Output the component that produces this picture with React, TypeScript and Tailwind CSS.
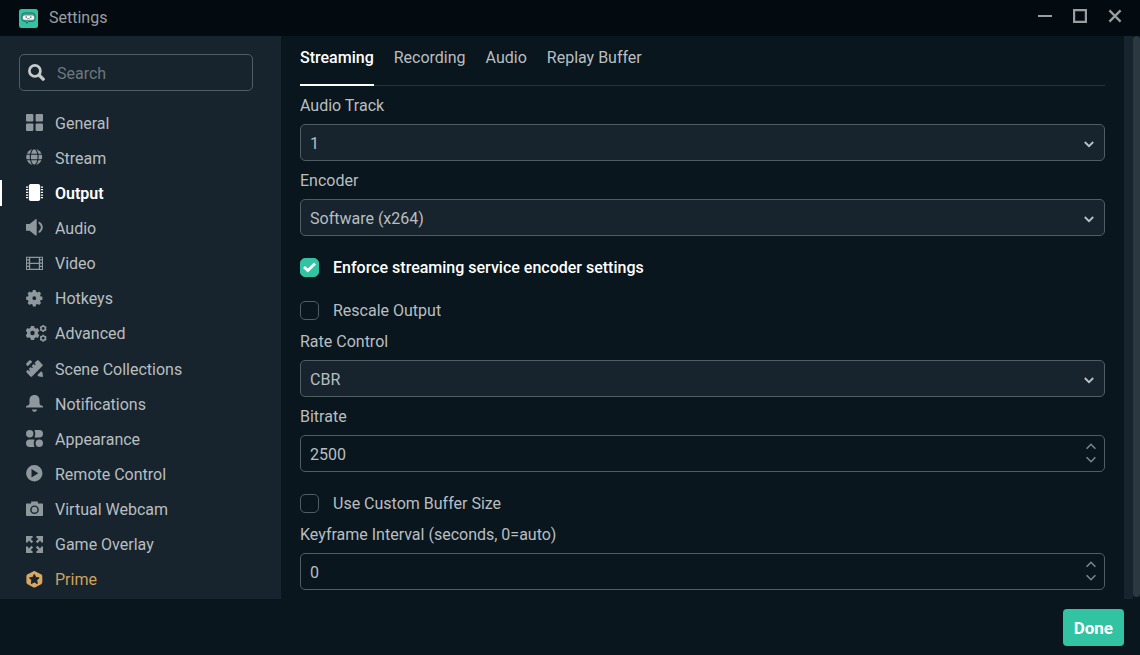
import React, { useState } from "react";

type IconProps = { children: React.ReactNode; wide?: boolean };

function Glyph({ children, wide }: IconProps) {
  return (
    <svg
      viewBox={wide ? "0 0 21 17" : "0 0 17 17"}
      className={wide ? "h-[17px] w-[21px] shrink-0" : "h-[17px] w-[17px] shrink-0"}
      fill="currentColor"
      aria-hidden="true"
    >
      {children}
    </svg>
  );
}

/** Outline of a toothed wheel with a round hole in the middle. */
function gearPath(cx: number, cy: number, outer: number, inner: number, teeth: number, hole: number) {
  const points: string[] = [];
  const step = (Math.PI * 2) / teeth;
  for (let i = 0; i < teeth; i++) {
    const mid = i * step - Math.PI / 2;
    const corners: [number, number][] = [
      [-0.34, inner],
      [-0.22, outer],
      [0.22, outer],
      [0.34, inner],
    ];
    for (const [offset, radius] of corners) {
      const angle = mid + offset * step;
      points.push(`${(cx + radius * Math.cos(angle)).toFixed(2)} ${(cy + radius * Math.sin(angle)).toFixed(2)}`);
    }
  }
  return `M${points.join("L")}zM${cx} ${cy - hole}a${hole} ${hole} 0 1 0 0 ${hole * 2}a${hole} ${hole} 0 1 0 0 ${-hole * 2}z`;
}

const GridIcon = () => (
  <Glyph>
    <rect x="0" y="0" width="7.4" height="7.4" rx="1" />
    <rect x="9.6" y="0" width="7.4" height="7.4" rx="1" />
    <rect x="0" y="9.6" width="7.4" height="7.4" rx="1" />
    <rect x="9.6" y="9.6" width="7.4" height="7.4" rx="1" />
  </Glyph>
);

const GlobeIcon = () => (
  <Glyph>
    <circle cx="8.2" cy="8" r="8" />
    <g fill="none" stroke="#17242d" strokeWidth="1.1">
      <ellipse cx="8.2" cy="8" rx="3.9" ry="8.2" />
      <path d="M0 5.3h16.4M0 10.7h16.4" />
    </g>
  </Glyph>
);

const ChipIcon = () => (
  <Glyph>
    <rect x="2.900" y="0" width="11.200" height="17" rx="1.800" />
    <path d="M0 2.4h2.2v1.3H0zM0 5h2.2v1.3H0zM0 7.7h2.2v1.3H0zM0 10.4h2.2v1.3H0zM0 13h2.2v1.3H0zM14.8 2.4H17v1.3h-2.2zM14.8 5H17v1.3h-2.2zM14.8 7.7H17v1.3h-2.2zM14.8 10.4H17v1.3h-2.2zM14.8 13H17v1.3h-2.2z" />
  </Glyph>
);

const SpeakerIcon = () => (
  <Glyph>
    <path d="M0 4.9h3.600L9.600.2c.5-.4 1.100-.1 1.100.5v15.200c0 .6-.6.9-1.100.5l-6-4.700H0z" />
    <path d="M12.600 2.500c2.600.9 4.200 3.100 4.200 5.800s-1.600 4.900-4.200 5.800v-2.200c1.400-.7 2.200-2 2.200-3.600s-.8-2.900-2.200-3.600z" />
  </Glyph>
);

const FilmIcon = () => (
  <Glyph>
    <path
      fillRule="evenodd"
      d="M0 1.700h17v13.300H0zM1 2.800v1.500h1.900V2.800zm0 2.800v1.900h1.900V5.600zm0 3.200v1.900h1.900V8.800zm0 3.200v1.900h1.900V12zM4.200 3v4.700h8.600V3zm0 5.900v4.800h8.600V8.900zM14.100 2.800v1.500H16V2.800zm0 2.800v1.900H16V5.600zm0 3.200v1.900H16V8.800zm0 3.200v1.900H16V12z"
    />
  </Glyph>
);

const GearIcon = () => (
  <Glyph>
    <path fillRule="evenodd" d={gearPath(8.3, 8.2, 8.3, 6.6, 8, 1.9)} />
  </Glyph>
);

const GearsIcon = () => (
  <Glyph wide>
    <path fillRule="evenodd" d={gearPath(6.5, 8, 7.2, 5.5, 6, 2.2)} />
    <path fillRule="evenodd" d={gearPath(17.2, 3.5, 3.6, 3, 6, 1.4)} />
    <path fillRule="evenodd" d={gearPath(17.2, 13.2, 3.6, 3, 6, 1.4)} />
  </Glyph>
);

const ToolsIcon = () => (
  <Glyph>
    <path d="M.7 2.900 2.900.7c.7-.7 1.700-.6 2.300 0l1.100 1.100-4.500 4.500L.7 5.200C.1 4.600 0 3.600.7 2.900z" />
    <path d="M11 .6c.5-.5 1.100-.5 1.600 0l3.800 3.800c.5.500.5 1.100 0 1.600L6 16.400c-.5.500-1.100.5-1.600 0L.6 12.600c-.5-.5-.5-1.100 0-1.600l1.200-1.200 1.300 1.300.9-.9-1.300-1.300 2-2 1.300 1.300.9-.9-1.300-1.300 2-2 1.300 1.300.9-.9-1.300-1.300z" />
    <path d="m15.100 11.300 1.200 1.200c.2.200.3.400.3.700l.4 3c0 .5-.3.800-.8.800l-3-.4c-.3 0-.5-.1-.7-.3l-1.200-1.200z" />
  </Glyph>
);

const BellIcon = () => (
  <Glyph>
    <path d="M8.500 0c3.200 0 5 2.200 5 5.200v3.100c0 1.200.8 1.900 2 2.200.9.200 1.500.5 1.500 1.100v.9H0v-.9c0-.6.6-.9 1.500-1.100 1.200-.3 2-1 2-2.200V5.200C3.500 2.200 5.300 0 8.500 0zM5.900 14.400h5.200c-.4 1.400-1.300 2.300-2.600 2.300s-2.200-.9-2.600-2.300z" />
  </Glyph>
);

const ShapesIcon = () => (
  <Glyph>
    <circle cx="3.700" cy="3.700" r="3.700" />
    <path d="M8.600.7c-.2-.4 0-.7.400-.7h4.300a3.700 3.700 0 0 1 0 7.400H9c-.4 0-.6-.3-.4-.7.900-1.900.9-4.100 0-6zM8.400 10.300c.2-.4 0-.7-.4-.7H3.700a3.700 3.700 0 0 0 0 7.400H8c.4 0 .6-.3.400-.7-.9-1.900-.9-4.100 0-6z" />
    <circle cx="13.300" cy="13.300" r="3.700" />
  </Glyph>
);

const PlayIcon = () => (
  <Glyph>
    <path fillRule="evenodd" d="M8.300 0a8.200 8.200 0 1 0 0 16.400A8.200 8.200 0 0 0 8.300 0zM5.500 4v8.400l6.800-4.200z" />
  </Glyph>
);

const CameraIcon = () => (
  <Glyph>
    <path
      fillRule="evenodd"
      d="M5.100.6h6.800v2H16c.6 0 1 .4 1 1v10.500c0 .6-.4 1-1 1H1c-.6 0-1-.4-1-1V3.600c0-.6.400-1 1-1h4.100zM8.500 4.400a4.300 4.300 0 1 0 0 8.600 4.300 4.300 0 0 0 0-8.600zM8.500 5.800a2.900 2.900 0 1 0 0 5.800 2.900 2.900 0 0 0 0-5.800z"
    />
  </Glyph>
);

const ExpandIcon = () => (
  <Glyph>
    <path d="M0 0h6.600v1.700L4.600 2.900l2.600 2.600-1.700 1.700-2.600-2.600-1.200 2H0zM17 0h-6.600v1.700l2 1.200-2.600 2.600 1.700 1.700 2.600-2.600 1.200 2H17zM0 17h6.600v-1.700l-2-1.200 2.600-2.600-1.700-1.700-2.600 2.600-1.200-2H0zM17 17h-6.600v-1.700l2-1.200-2.600-2.600 1.700-1.700 2.600 2.600 1.200-2H17z" />
  </Glyph>
);

const PrimeIcon = () => (
  <Glyph>
    <path d="M7.200.4c.7-.4 1.500-.4 2.200 0l5.600 2.800c.8.400 1.300 1.100 1.300 2v6.100c0 .8-.4 1.500-1.100 1.900l-5.800 3c-.7.400-1.500.4-2.200 0l-5.600-3c-.7-.4-1.200-1.100-1.200-1.900V5.200c0-.8.400-1.600 1.200-2z" />
    <path
      fill="#17242d"
      stroke="#17242d"
      strokeWidth="1"
      strokeLinejoin="round"
      d="m8.300 3.400 1.500 3 3.300.5-2.400 2.300.6 3.400-3-1.600-3 1.600.6-3.400-2.400-2.300 3.300-.5z"
    />
  </Glyph>
);

const navItems: { name: string; icon: React.ReactNode }[] = [
  { name: "General", icon: <GridIcon /> },
  { name: "Stream", icon: <GlobeIcon /> },
  { name: "Output", icon: <ChipIcon /> },
  { name: "Audio", icon: <SpeakerIcon /> },
  { name: "Video", icon: <FilmIcon /> },
  { name: "Hotkeys", icon: <GearIcon /> },
  { name: "Advanced", icon: <GearsIcon /> },
  { name: "Scene Collections", icon: <ToolsIcon /> },
  { name: "Notifications", icon: <BellIcon /> },
  { name: "Appearance", icon: <ShapesIcon /> },
  { name: "Remote Control", icon: <PlayIcon /> },
  { name: "Virtual Webcam", icon: <CameraIcon /> },
  { name: "Game Overlay", icon: <ExpandIcon /> },
  { name: "Prime", icon: <PrimeIcon /> },
];

function NavItem({ name, icon }: { name: string; icon: React.ReactNode }) {
  const active = name === "Output";
  const tone = active
    ? "font-semibold text-white"
    : name === "Prime"
      ? "text-[#d0a15c]"
      : "text-[#b9bec1]";
  const iconTone = active ? "text-white" : name === "Prime" ? "text-[#d9a75f]" : "text-[#8f989d]";
  return (
    <li className="flex min-h-[35px] flex-1 items-center">
      <a
        href={"#" + name.toLowerCase().replace(" ", "-")}
        aria-current={active ? "page" : undefined}
        className={`flex h-[26px] w-full items-center border-l-2 pl-6 ${active ? "border-white" : "border-transparent"} ${tone}`}
      >
        <span className={`flex w-[29px] ${iconTone}`}>{icon}</span>
        <span className="pt-[2px]">{name}</span>
      </a>
    </li>
  );
}

function SelectField({ id, label, value }: { id: string; label: string; value: string }) {
  return (
    <div>
      <label htmlFor={id} className="block pt-[2px] leading-9">
        {label}
      </label>
      <div className="relative">
        <select
          id={id}
          defaultValue={value}
          className="block h-[37px] w-full appearance-none rounded-[5px] border border-[#4f5e65] bg-[#17242d] pt-[2px] pr-9 pl-[9px] outline-none"
        >
          <option>{value}</option>
        </select>
        <svg
          viewBox="0 0 10 7"
          className="pointer-events-none absolute top-[17px] right-[11px] h-[7px] w-[10px]"
          fill="none"
          stroke="#bdc2c4"
          strokeWidth="1.8"
          aria-hidden="true"
        >
          <path d="m.8 1 4.200 4.200L9.200 1" />
        </svg>
      </div>
    </div>
  );
}

function NumberField({ id, label, initial }: { id: string; label: string; initial: number }) {
  const [value, setValue] = useState(initial);
  return (
    <div>
      <label htmlFor={id} className="block pt-[2px] leading-9">
        {label}
      </label>
      <div className="flex h-[37px] items-center rounded-[5px] border border-[#4f5e65] pr-2 pl-[9px]">
        <input
          id={id}
          type="number"
          value={value}
          onChange={(e) => setValue(Number(e.target.value))}
          className="w-full min-w-0 flex-1 bg-transparent pt-[2px] outline-none [appearance:textfield] [&::-webkit-inner-spin-button]:appearance-none"
        />
        <div className="flex flex-col gap-[6px] pb-[2px]">
          <button
            type="button"
            className="block"
            aria-label={`Increase ${label}`}
            onClick={() => setValue(value + 1)}
          >
            <svg viewBox="0 0 10 7" className="block h-[7px] w-[10px]" fill="none" stroke="#7b868b" strokeWidth="1.6">
              <path d="M.6 5.700 5 1.300l4.400 4.400" />
            </svg>
          </button>
          <button
            type="button"
            className="block"
            aria-label={`Decrease ${label}`}
            onClick={() => setValue(Math.max(0, value - 1))}
          >
            <svg viewBox="0 0 10 7" className="block h-[7px] w-[10px]" fill="none" stroke="#7b868b" strokeWidth="1.6">
              <path d="M.6 1.300 5 5.700l4.400-4.400" />
            </svg>
          </button>
        </div>
      </div>
    </div>
  );
}

function CheckField({ id, label, checked = false }: { id: string; label: string; checked?: boolean }) {
  return (
    <div className="mt-5 flex h-[23px] items-center gap-[14px]">
      <span className="grid shrink-0">
        <input
          id={id}
          type="checkbox"
          defaultChecked={checked}
          className="peer col-start-1 row-start-1 h-[19px] w-[19px] appearance-none rounded-[5px] border border-[#4f5e65] checked:border-[#31c3a2] checked:bg-[#31c3a2]"
        />
        <svg
          viewBox="0 0 19 19"
          className="pointer-events-none invisible col-start-1 row-start-1 h-[19px] w-[19px] peer-checked:visible"
          fill="none"
          stroke="#fff"
          strokeWidth="2.800"
          aria-hidden="true"
        >
          <path d="m4 9 3.800 3.600 7.200-7" />
        </svg>
      </span>
      <label htmlFor={id} className={checked ? "font-medium text-white" : undefined}>
        {label}
      </label>
    </div>
  );
}

const tabs = ["Streaming", "Recording", "Audio", "Replay Buffer"];

export default function App() {
  const [tab, setTab] = useState("Streaming");
  return (
    <div className="flex min-h-screen flex-col bg-[#09161d] font-[Roboto,'Liberation_Sans',sans-serif] text-base leading-6 text-[#b9bec1]">
      <header className="flex h-9 items-center justify-between bg-[#040b10] pr-[18px] pl-[19px]">
        <div className="flex items-center gap-[11px] text-[#9a9ea1]">
          <svg viewBox="0 0 19 19" className="h-[19px] w-[19px]" aria-hidden="true">
            <rect width="19" height="19" rx="2.500" fill="#31c3a2" />
            <path
              d="M6 3.900h7a3.300 3.300 0 0 1 3.300 3.400v1.800a3.300 3.300 0 0 1-3.300 3.400H9.300l-1.500 2-1-2H6a3.300 3.300 0 0 1-3.300-3.400V7.300A3.300 3.300 0 0 1 6 3.900z"
              fill="#4f9c8e"
              stroke="#25635a"
              strokeWidth=".8"
            />
            <rect x="3.900" y="6.600" width="11.200" height="4.200" rx="1.600" fill="#f3f8f7" />
            <path d="M6.600 7.400h1.300v1.400H6.600zM11.100 7.400h1.300v1.400h-1.300zM8.300 9.400h2.400v.7H8.300z" fill="#3b4c50" />
          </svg>
          <h1>Settings</h1>
        </div>
        <div className="flex items-center gap-[21px] pb-1 text-[#9a9ea1]">
          <button type="button" aria-label="Minimize">
            <svg viewBox="0 0 14 14" className="h-[14px] w-[14px]" stroke="currentColor" strokeWidth="2">
              <path d="M0 7h14" />
            </svg>
          </button>
          <button type="button" aria-label="Maximize">
            <svg viewBox="0 0 14 14" className="h-[14px] w-[14px]" fill="none" stroke="currentColor" strokeWidth="2.200">
              <path d="M1.100 1.100h11.800v11.800H1.100z" />
            </svg>
          </button>
          <button type="button" aria-label="Close">
            <svg viewBox="0 0 14 14" className="h-[14px] w-[14px]" stroke="currentColor" strokeWidth="2.200">
              <path d="m1.400 1.400 11.200 11.200M12.600 1.400 1.400 12.600" />
            </svg>
          </button>
        </div>
      </header>

      <div className="flex flex-1">
        <aside className="flex w-[281px] shrink-0 flex-col bg-[#17242d] pt-[18px]">
          <div className="mr-7 mb-[14px] ml-[19px] flex h-[37px] items-center gap-3 rounded-[5px] border border-[#4f5e65] pl-2">
            <svg viewBox="0 0 17 17" className="h-[17px] w-[17px] shrink-0" fill="none" stroke="#c4c9cb" aria-hidden="true">
              <circle cx="6.900" cy="6.900" r="5.500" strokeWidth="2.700" />
              <path d="m11 11 5.200 5.200" strokeWidth="3.200" />
            </svg>
            <input
              type="search"
              aria-label="Search"
              placeholder="Search"
              className="w-full min-w-0 bg-transparent pt-[2px] outline-none placeholder:text-[#6d777d] placeholder:opacity-100"
            />
          </div>
          <nav className="flex flex-1 flex-col pb-[2px]">
            <ul className="flex flex-1 flex-col">
              {navItems.map((item) => (
                <NavItem key={item.name} {...item} />
              ))}
            </ul>
          </nav>
        </aside>

        <main className="min-w-0 flex-1 px-[19px] pb-[9px]">
          <div role="tablist" className="flex h-[50px] gap-5 border-b border-[#27343b]">
            {tabs.map((name) => (
              <button
                key={name}
                type="button"
                role="tab"
                aria-selected={name === tab}
                onClick={() => setTab(name)}
                className={`-mb-px h-[50px] border-b-2 pb-1 ${
                  name === tab ? "border-white font-medium text-white" : "border-transparent"
                }`}
              >
                {name}
              </button>
            ))}
          </div>
          <SelectField id="audio-track" label="Audio Track" value="1" />
          <SelectField id="encoder" label="Encoder" value="Software (x264)" />
          <CheckField id="enforce" label="Enforce streaming service encoder settings" checked />
          <CheckField id="rescale" label="Rescale Output" />
          <SelectField id="rate-control" label="Rate Control" value="CBR" />
          <NumberField id="bitrate" label="Bitrate" initial={2500} />
          <CheckField id="buffer" label="Use Custom Buffer Size" />
          <NumberField id="keyframe" label="Keyframe Interval (seconds, 0=auto)" initial={0} />
        </main>

        <div className="flex w-4 shrink-0" aria-hidden="true">
          <div className="w-[9px] bg-[#17242d]" />
          <div className="mb-[2px] flex-1 rounded bg-[#2b383f]" />
        </div>
      </div>

      <footer className="flex h-14 items-center justify-end pr-4">
        <button type="button" className="h-[37px] rounded bg-[#31c3a2] px-[11px] pt-[2px] text-[17px] font-bold text-white">
          Done
        </button>
      </footer>
    </div>
  );
}
